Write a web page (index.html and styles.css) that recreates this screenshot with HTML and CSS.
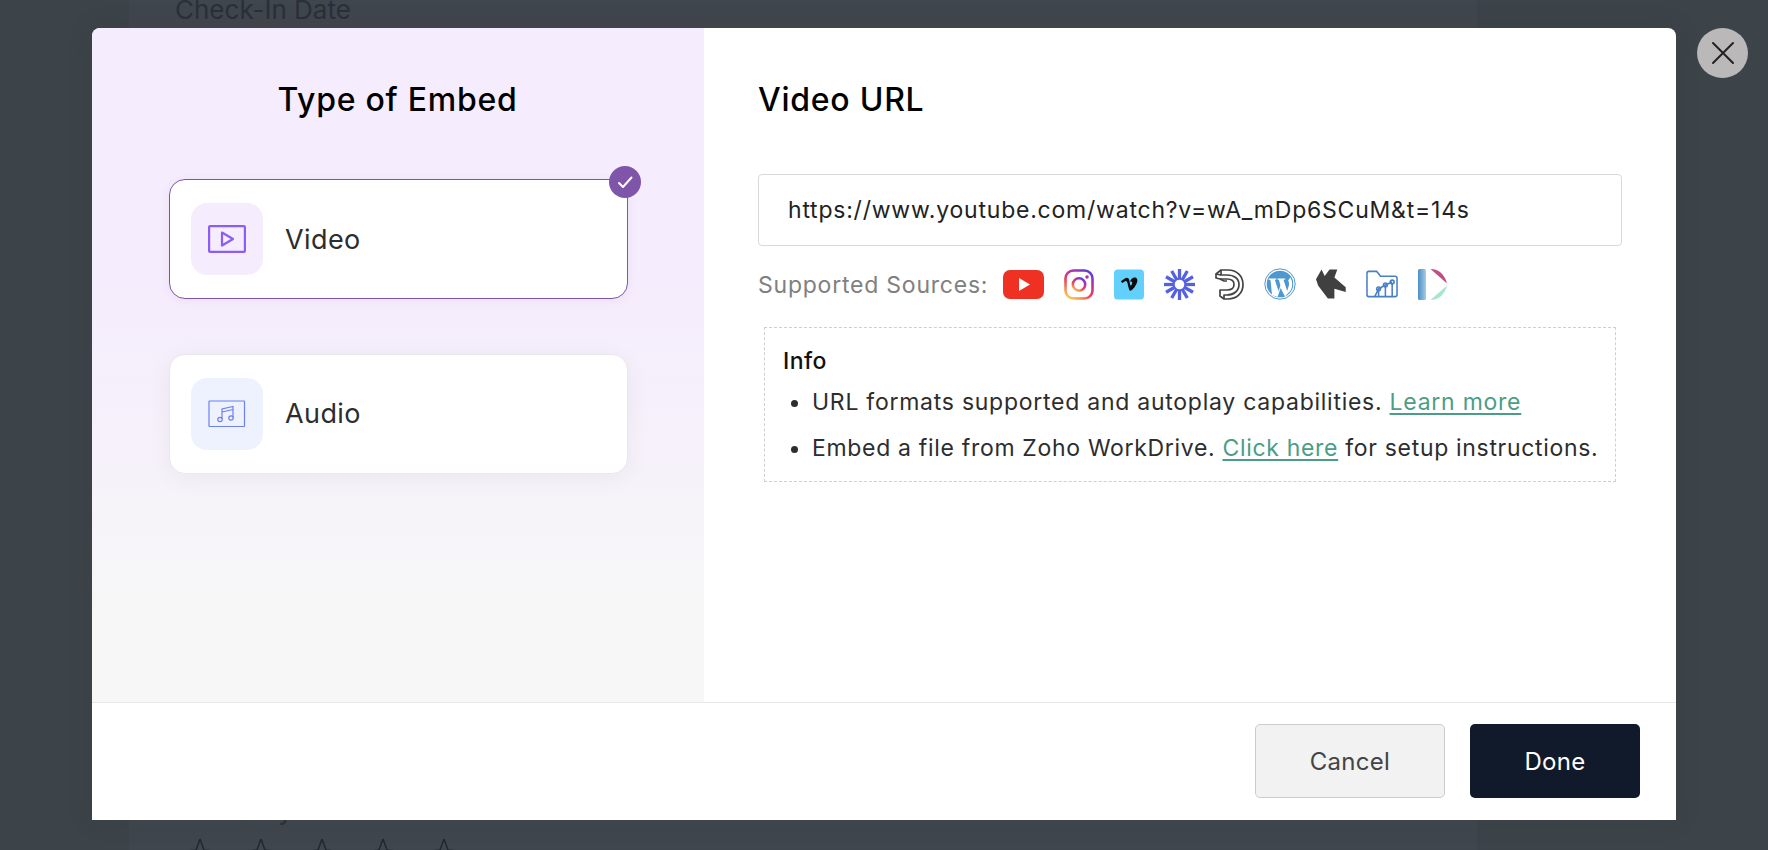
FILE: index.html
```html
<!DOCTYPE html>
<html lang="en">
<head>
<meta charset="utf-8">
<title>Type of Embed</title>
<link rel="stylesheet" href="styles.css">
</head>
<body>
<div class="page">
  <div class="form-sheet">
    <div class="form-label">Check-In Date</div>
    <div class="form-label form-label-low">Your Stay</div>
    <div class="stars">
      <svg class="star" viewBox="0 0 26 20"><path d="M13 1 L9 12 L1 13 L7 19 M13 1 L17 12 L25 13 L19 19"/></svg>
      <svg class="star" viewBox="0 0 26 20"><path d="M13 1 L9 12 L1 13 L7 19 M13 1 L17 12 L25 13 L19 19"/></svg>
      <svg class="star" viewBox="0 0 26 20"><path d="M13 1 L9 12 L1 13 L7 19 M13 1 L17 12 L25 13 L19 19"/></svg>
      <svg class="star" viewBox="0 0 26 20"><path d="M13 1 L9 12 L1 13 L7 19 M13 1 L17 12 L25 13 L19 19"/></svg>
      <svg class="star" viewBox="0 0 26 20"><path d="M13 1 L9 12 L1 13 L7 19 M13 1 L17 12 L25 13 L19 19"/></svg>
    </div>
  </div>
</div>

<div class="modal">
  <div class="modal-main">
    <section class="type-panel">
      <h2 class="panel-title panel-title-center">Type of Embed</h2>
      <div class="type-card type-card-active">
        <span class="type-icon type-icon-video">
          <svg width="38" height="28" viewBox="0 0 38 28" fill="none" stroke="#8b5cf6" stroke-width="2.2"><rect x="1.1" y="1.1" width="35.8" height="25.8" rx="1"/><path d="M14 7.5 L25 14 L14 20.5 Z" stroke-linejoin="round"/></svg>
        </span>
        <span class="type-name">Video</span>
        <span class="check-badge">
          <svg width="18" height="18" viewBox="0 0 18 18" fill="none" stroke="#fff" stroke-width="2" stroke-linecap="round" stroke-linejoin="round"><path d="M3 10 L7 14 L15.5 4.5"/></svg>
        </span>
      </div>
      <div class="type-card">
        <span class="type-icon type-icon-audio">
          <svg width="38" height="28" viewBox="0 0 38 28" fill="none" stroke="#6b82f0" stroke-width="1.2"><rect x="1" y="1" width="35.5" height="25.5" rx="0.5"/><path d="M14 19 V9 L25 6.5 V17.5 M14 12 L25 9.5"/><circle cx="12" cy="19.5" r="2.2"/><circle cx="23" cy="18" r="2.2"/></svg>
        </span>
        <span class="type-name type-name-audio">Audio</span>
      </div>
    </section>

    <section class="url-panel">
      <h2 class="panel-title">Video URL</h2>
      <div class="url-input">https://www.youtube.com/watch?v=wA_mDp6SCuM&amp;t=14s</div>
      <div class="sources">
        <span class="sources-label">Supported Sources:</span>
        <div class="source-icons">
          <svg width="41" height="29" viewBox="0 0 41 29"><rect width="41" height="29" rx="7" fill="#ee3123"/><path d="M16 8 L27 14.5 L16 21 Z" fill="#fff"/></svg>
          <svg width="30" height="31" viewBox="0 0 30 31" fill="none" stroke-width="2.6"><defs><linearGradient id="ig" x1="0.2" y1="1" x2="0.8" y2="0"><stop offset="0" stop-color="#fbc54f"/><stop offset="0.4" stop-color="#e8405a"/><stop offset="0.75" stop-color="#b32fb0"/><stop offset="1" stop-color="#5b3fd6"/></linearGradient></defs><rect x="1.5" y="1.5" width="27" height="28" rx="8" stroke="url(#ig)"/><circle cx="15" cy="15.5" r="6.2" stroke="url(#ig)"/><circle cx="23" cy="8" r="1.8" fill="#b32fb0" stroke="none"/></svg>
          <svg width="30" height="31" viewBox="0 0 31 31"><rect width="31" height="31" rx="4" fill="#62d0fb"/><path d="M7 12.5 L9 14 C10 13 11.5 11.8 12.5 12 C14 12.3 14 15 15 18.5 C15.8 21.5 16.3 22 17 22 C18.5 22 22 18 23.6 14 C24.8 11 24 8.3 21.5 8.3 C19 8.3 17.3 10 16.5 12.6 C18 11.9 19.3 12.5 18.7 14.5 C18.3 15.8 17.8 16.5 17.3 16.5 C16.5 16.5 16.4 13 15.8 11 C15.2 9 14 8.3 12.5 8.7 C10.8 9.2 8.5 11 7 12.5 Z" fill="#0b0b0b"/></svg>
          <svg width="31" height="31" viewBox="0 0 31 31" fill="none"><g stroke="#5560e0" stroke-width="3.3"><path d="M15.5 0 V10"/><path d="M15.5 21 V31"/><path d="M0 15.5 H10"/><path d="M21 15.5 H31"/><path d="M7.7 2 L12.7 10.7"/><path d="M18.3 20.3 L23.3 29"/><path d="M23.3 2 L18.3 10.7"/><path d="M12.7 20.3 L7.7 29"/><path d="M2 7.7 L10.7 12.7"/><path d="M20.3 18.3 L29 23.3"/><path d="M29 7.7 L20.3 12.7"/><path d="M10.7 18.3 L2 23.3"/></g><circle cx="15.5" cy="15.5" r="5.8" stroke="#5560e0" stroke-width="2"/></svg>
          <svg width="29" height="31" viewBox="0 0 29 31" fill="none" stroke="#444" stroke-width="1.7" stroke-linejoin="round"><path d="M1 5 L6 1 H13 C22 1 28 7 28 15.5 C28 24 22 30 13 30 H9 L5 27 V21 H12 C16.5 21 19 19 19 15.5 C19 12 16.5 10 12 10 H5 L1 9 Z"/><path d="M6 1 V6 L12 6 C19 6 24 9.5 24 15.5 C24 21.5 19 26 12 26 H9 V30"/><path d="M1 5 L6 6 M5 10 L9 12 H12"/></svg>
          <svg width="32" height="32" viewBox="0 0 32 32"><circle cx="16" cy="16" r="15.2" fill="none" stroke="#4f98cf" stroke-width="1"/><circle cx="16" cy="16" r="13.3" fill="#4f98cf"/><path d="M4.5 10.5 H12.5 V11.5 L10.8 11.8 L14.6 23.2 L16.4 17.6 L15 12 L13.6 11.6 V10.5 H21.2 V11.5 L19.5 11.8 L23.2 23 L24.8 17.8 C25.4 15.6 24.9 13.6 24.2 12.4 C25.2 11.5 26 9.5 26.2 9.2 C29 13.5 28.7 19.4 26.2 23 L21 28.6 L16.6 20 L13.6 29 L8 27 L6.5 12 L4.5 11.5 Z" fill="#fff"/></svg>
          <svg width="30" height="32" viewBox="0 0 31 32"><path d="M0 11 L5.7 1 L9 7.7 L14 1 L22 1 L19 9.3 L30.7 19.3 L30.7 24.3 L19 21 L19 31 L12.3 31 L2.3 17.7 Z" fill="#404040"/></svg>
          <svg width="32" height="28" viewBox="0 0 33 28" fill="none" stroke="#4a7fc4" stroke-width="1.6"><path d="M7 27 H3 C1.8 27 1 26 1 25 V3 C1 1.8 1.8 1 3 1 H11 L15 6 H30 C31.2 6 32 6.8 32 8 V25 C32 26 31.2 27 30 27 H7"/><path d="M13 27 V20 M20 27 V16 M27 27 V13 M9 27 L13 19 L20 15 L27 12"/><circle cx="13" cy="19" r="2"/><circle cx="20" cy="15" r="2"/><circle cx="27" cy="12" r="2"/></svg>
          <svg width="29" height="31" viewBox="0 0 29 31"><defs><linearGradient id="bar" x1="0" y1="0" x2="1" y2="0"><stop offset="0" stop-color="#4a90c8"/><stop offset="1" stop-color="#a8cbe5"/></linearGradient></defs><rect x="0" y="0" width="8" height="31" rx="1.5" fill="url(#bar)"/><path d="M12.5 0 C21 0 27 6 29 14.5 Z" fill="#c14d85"/><path d="M12.5 31 C21 31 27 25 29 16.5 Z" fill="#a6e8cd"/></svg>
        </div>
      </div>
      <div class="info-box">
        <div class="info-title">Info</div>
        <ul class="info-list">
          <li>URL formats supported and autoplay capabilities. <a class="info-link" href="#">Learn more</a></li>
          <li class="info-item-tight">Embed a file from Zoho WorkDrive. <a class="info-link" href="#">Click here</a> for setup instructions.</li>
        </ul>
      </div>
    </section>
  </div>
  <footer class="modal-footer">
    <button class="btn btn-cancel" type="button">Cancel</button>
    <button class="btn btn-done" type="button">Done</button>
  </footer>
</div>

<button class="close-btn" type="button" aria-label="Close">
  <svg width="24" height="24" viewBox="0 0 24 24" fill="none" stroke="#222" stroke-width="2" stroke-linecap="round"><path d="M2 2 L22 22 M22 2 L2 22"/></svg>
</button>
</body>
</html>
```

FILE: styles.css
```css
* { box-sizing: border-box; }

html, body {
  margin: 0;
  height: 850px;
  overflow: hidden;
}

body {
  background: #3c4349;
  font-family: Inter, "Noto Sans", sans-serif;
}

.page {
  height: 850px;
  padding-left: 129px;
}

.form-sheet {
  width: 1348px;
  height: 850px;
  background: #40464e;
  padding: 0 46px;
  display: flex;
  flex-direction: column;
}

.form-label {
  font-size: 26px;
  line-height: 30px;
  color: #2a3037;
  margin-top: -5px;
}

.form-label-low {
  margin-top: 771px;
}

.stars {
  display: flex;
  gap: 35px;
  margin-top: 12px;
  margin-left: 12px;
}

.star {
  width: 26px;
  height: 20px;
  flex: none;
  fill: none;
  stroke: #23282e;
  stroke-width: 1.5;
}

.modal {
  position: absolute;
  left: 92px;
  top: 28px;
  width: 1584px;
  height: 792px;
  background: #fff;
  border-radius: 8px 8px 0 0;
  overflow: hidden;
  display: flex;
  flex-direction: column;
  box-shadow: 0 0 24px rgba(60, 60, 40, 0.15);
}

.modal-main {
  flex: 1;
  display: flex;
  min-height: 0;
}

.type-panel {
  width: 612px;
  flex: none;
  padding: 52px 76px 0 77px;
  background: linear-gradient(180deg, #f5ecfd 0%, #f5ecfd 38%, #f7f7f7 88%);
}

.panel-title {
  margin: 0;
  font-size: 32px;
  line-height: 40px;
  font-weight: 500;
  letter-spacing: 0.75px;
  color: #000;
}

.panel-title-center {
  text-align: center;
  margin-bottom: 59px;
  padding-right: 2px;
}

.type-card {
  position: relative;
  height: 120px;
  background: #fff;
  border-radius: 16px;
  display: flex;
  align-items: center;
  padding-left: 21px;
  gap: 22px;
  border: 1px solid #e9e9ec;
  box-shadow: 0 4px 24px rgba(0, 0, 0, 0.05);
  margin-top: 55px;
}

.type-card-active {
  margin-top: 0;
  border-color: #7f55aa;
  box-shadow: 0 2px 10px rgba(127, 85, 170, 0.08);
}

.type-icon {
  width: 72px;
  height: 72px;
  border-radius: 16px;
  display: flex;
  align-items: center;
  justify-content: center;
}

.type-icon-video { background: #f5ecfd; }
.type-icon-audio { background: #eef1fe; }

.type-name {
  font-size: 27px;
  letter-spacing: 0.4px;
  color: #2d2d2d;
}

.type-name-audio {
  margin-bottom: 2px;
}

.check-badge {
  position: absolute;
  top: -14px;
  right: -14px;
  width: 32px;
  height: 32px;
  border-radius: 50%;
  background: #7f55aa;
  display: flex;
  align-items: center;
  justify-content: center;
}

.url-panel {
  flex: 1;
  padding: 52px 54px 0 54px;
}

.url-input {
  margin-top: 54px;
  height: 72px;
  border: 1px solid #d9d9d9;
  border-radius: 4px;
  padding-left: 29px;
  display: flex;
  align-items: center;
  font-size: 23px;
  letter-spacing: 0.78px;
  color: #222;
}

.sources {
  display: flex;
  align-items: center;
  margin-top: 22px;
  height: 32px;
}

.sources-label {
  width: 245px;
  flex: none;
  font-size: 23px;
  letter-spacing: 0.77px;
  color: #808080;
  padding-top: 2px;
}

.source-icons {
  display: flex;
  align-items: center;
  gap: 20px;
}

.info-box {
  margin: 27px 6px 0;
  height: 155px;
  border: 1px dashed #cfcfcf;
  padding: 17px 8px 17px 18px;
  color: #2d2d2d;
  font-size: 23px;
  letter-spacing: 0.74px;
}

.info-title {
  font-weight: 500;
  line-height: 32px;
  letter-spacing: 0.4px;
  color: #111;
}

.info-list {
  margin: 9px 0 0;
  padding-left: 29px;
}

.info-list li {
  line-height: 32px;
  margin-bottom: 14px;
  white-space: nowrap;
}

.info-list .info-item-tight {
  letter-spacing: 0.68px;
}

.info-link {
  color: #4a9e85;
  text-decoration: underline;
  text-underline-offset: 3px;
}

.modal-footer {
  height: 118px;
  flex: none;
  background: #fff;
  border-top: 1px solid #e8e8e8;
  display: flex;
  justify-content: flex-end;
  align-items: flex-start;
  gap: 25px;
  padding: 21px 36px 0 0;
}

.btn {
  height: 74px;
  border-radius: 5px;
  font-family: inherit;
  font-size: 24px;
  letter-spacing: 0.3px;
}

.btn-cancel {
  width: 190px;
  background: #f2f2f2;
  border: 1px solid #ccc;
  color: #444;
}

.btn-done {
  width: 170px;
  background: #111a2b;
  border: 0;
  color: #fff;
}

.close-btn {
  position: absolute;
  left: 1697px;
  top: 28px;
  width: 51px;
  height: 50px;
  border: 0;
  padding: 0;
  border-radius: 50%;
  background: #bab8b8;
  display: flex;
  align-items: center;
  justify-content: center;
}
```
